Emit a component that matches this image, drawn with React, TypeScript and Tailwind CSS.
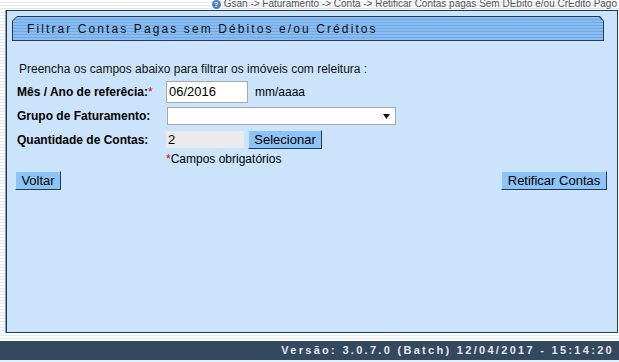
import React from "react";

const stripes =
  "bg-[repeating-linear-gradient(to_bottom,#ffffff_0px,#ffffff_2px,#dde9f4_2px,#dde9f4_3px)]";

export default function App() {
  return (
    <div
      className="w-[619px] h-[362px] overflow-hidden bg-white flex flex-col text-black"
      style={{ fontFamily: '"Liberation Sans", Arial, sans-serif' }}
    >
      {/* header breadcrumb */}
      <div className={`h-[10px] flex justify-end items-end pr-[2px] ${stripes}`}>
        <div className="flex items-center gap-[3px] text-[10px] leading-[10px] text-[#555] translate-y-[-1px]">
          <span className="inline-flex w-[9px] h-[9px] rounded-full bg-[#4a7fc4] text-white text-[7px] leading-[9px] font-bold justify-center">?</span>
          <span>Gsan -&gt; Faturamento -&gt; Conta -&gt; Retificar Contas pagas Sem DEbito e/ou CrEdito Pago</span>
        </div>
      </div>

      <div className="flex h-[323px]">
        {/* left strip */}
        <div className={`w-[6px] border-r border-[#8a9bb0] ${stripes}`} />
        {/* panel */}
        <div className="w-[612px] bg-[#cbe4fc] border border-[#243a52] pl-[5px] pr-[13px] pt-[5px] flex flex-col">
          {/* title bar */}
          <div
            className="h-[25px] bg-[#243a52] p-px"
            style={{ clipPath: "polygon(5px 0, calc(100% - 4px) 0, 100% 5px, 100% 100%, 0 100%, 0 5px)" }}
          >
            <div
              className="h-full bg-[repeating-linear-gradient(to_bottom,#8cbdf0_0px,#8cbdf0_2px,#6fa8e6_2px,#6fa8e6_3px)] flex items-center pl-[14px] text-[12px] tracking-[2.1px] text-[#111]"
              style={{ clipPath: "polygon(4px 0, calc(100% - 4px) 0, 100% 4px, 100% 100%, 0 100%, 0 4px)" }}
            >
              Filtrar Contas Pagas sem Débitos e/ou Créditos
            </div>
          </div>

          <div className="pt-[21px] pl-[7px] text-[12px] leading-[14px] text-[#111]">
            Preencha os campos abaixo para filtrar os imóveis com releitura :
          </div>

          <div className="mt-[5px] flex items-center h-[22px] text-[12px]">
            <div className="w-[154px] pl-[5px] font-bold">
              Mês / Ano de referêcia:<span className="text-[#d00000] font-normal">*</span>
            </div>
            <div className="w-[82px] h-[22px] bg-white border border-[#a9a9a9] text-[13px] leading-[20px] pl-[2px]">06/2016</div>
            <div className="pl-[7px] text-[12px]">mm/aaaa</div>
          </div>

          <div className="mt-[4px] flex items-center h-[18px] text-[12px]">
            <div className="w-[155px] pl-[5px] font-bold">Grupo de Faturamento:</div>
            <div className="w-[229px] h-[18px] bg-white border border-[#a9a9a9] flex justify-end items-center pr-[5px]">
              <svg width="7" height="5" viewBox="0 0 7 5"><path d="M0 0h7L3.5 5z" fill="#111" /></svg>
            </div>
          </div>

          <div className="mt-[5px] flex items-center h-[19px] text-[12px]">
            <div className="w-[154px] pl-[5px] font-bold">Quantidade de Contas:</div>
            <div className="w-[78px] h-[17px] bg-[#ebebeb] text-[13px] leading-[17px] pl-[2px]">2</div>
            <div className="ml-[4px] w-[74px] h-[19px] bg-[#8ec3f7] border border-[#243a52] border-t-[#cfe4fb] border-l-[#cfe4fb] text-[13px] leading-[17px] text-center">
              Selecionar
            </div>
          </div>

          <div className="mt-[2px] pl-[154px] text-[12px] leading-[16px]">
            <span className="text-[#d00000]">*</span>Campos obrigatórios
          </div>

          <div className="mt-[4px] flex justify-between pl-[3px] mr-[-3px]">
            <div className="w-[46px] h-[19px] bg-[#8ec3f7] border border-[#243a52] border-t-[#cfe4fb] border-l-[#cfe4fb] text-[13px] leading-[17px] text-center">Voltar</div>
            <div className="w-[106px] h-[19px] bg-[#8ec3f7] border border-[#243a52] border-t-[#cfe4fb] border-l-[#cfe4fb] text-[13px] leading-[17px] text-center">Retificar Contas</div>
          </div>
        </div>
        <div className="flex-1" />
      </div>

      {/* spacer */}
      <div className={`h-[8px] ${stripes}`} />
      {/* footer */}
      <div className="h-[19px] bg-[#33495f] flex items-center justify-end pr-[5px] text-[11px] font-bold tracking-[2.3px] text-[#e6e6e6]">
        Versão: 3.0.7.0 (Batch) 12/04/2017 - 15:14:20
      </div>
      <div className="flex-1 bg-[#dff0f8]" />
    </div>
  );
}
